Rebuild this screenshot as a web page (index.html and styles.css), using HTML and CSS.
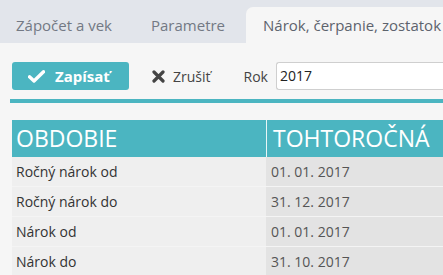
FILE: index.html
```html
<!DOCTYPE html>
<html lang="sk">
<head>
<meta charset="utf-8">
<link rel="stylesheet" href="styles.css">
</head>
<body>
<div class="tabs">
  <div class="tab t1">Zápočet a vek</div>
  <div class="tab t2">Parametre</div>
  <div class="tab active">Nárok, čerpanie, zostatok</div>
</div>
<div class="toolbar">
  <button class="btn-save">
    <svg class="check" width="17" height="13" viewBox="0 0 17 13"><path d="M1.5 6.8 L6 11 L15.5 1.8" fill="none" stroke="#fff" stroke-width="3.4" stroke-linecap="round" stroke-linejoin="round"/></svg>
    <span>Zapísať</span>
  </button>
  <div class="cancel">
    <svg class="x" width="13" height="13" viewBox="0 0 13 13"><path d="M2 2 L11 11 M11 2 L2 11" stroke="#444" stroke-width="3.2" stroke-linecap="round"/></svg>
    <span>Zrušiť</span>
  </div>
  <label class="rok">Rok</label>
  <div class="select">2017</div>
</div>
<div class="rule"></div>
<table class="grid">
  <thead>
    <tr><th class="c1">OBDOBIE</th><th class="c2">TOHTOROČNÁ</th></tr>
  </thead>
  <tbody>
    <tr><td class="c1">Ročný nárok od</td><td class="c2">01. 01. 2017</td></tr>
    <tr><td class="c1">Ročný nárok do</td><td class="c2">31. 12. 2017</td></tr>
    <tr><td class="c1">Nárok od</td><td class="c2">01. 01. 2017</td></tr>
    <tr><td class="c1">Nárok do</td><td class="c2">31. 10. 2017</td></tr>
  </tbody>
</table>
</body>
</html>
```
FILE: styles.css
```css
html, body {
  margin: 0;
  padding: 0;
  background: #f6f6f6;
  font-family: "Open Sans", "DejaVu Sans", sans-serif;
  overflow: hidden;
  width: 443px;
  height: 275px;
}
.tabs {
  display: flex;
  height: 43px;
  box-sizing: border-box;
  padding-top: 7px;
  background: #e2e5eb;
  overflow: hidden;
}
.tab {
  font-size: 15px;
  color: #737984;
  line-height: 36px;
  padding-left: 16px;
  white-space: nowrap;
  flex-shrink: 0;
  box-sizing: border-box;
}
.tab.t1 { width: 135px; }
.tab.t2 { width: 111px; }
.tab.active {
  padding-left: 17px;
  flex: 1 0 auto;
  background: #f6f6f6;
  border-radius: 7px 0 0 0;
  color: #5d636d;
}
.toolbar {
  display: flex;
  align-items: center;
  margin-top: 19px;
  padding-left: 12px;
  height: 28px;
}
.btn-save {
  display: flex;
  align-items: center;
  flex-shrink: 0;
  width: 117px;
  height: 28px;
  border: none;
  border-radius: 3px;
  background: #4bb5c1;
  color: #fff;
  font-family: "Open Sans", sans-serif;
  font-weight: 700;
  font-size: 15px;
  padding: 0 0 0 16px;
  box-sizing: border-box;
}
.btn-save .check { margin-right: 10px; }
.cancel {
  display: flex;
  align-items: center;
  margin-left: 23px;
  font-size: 14px;
  color: #444;
}
.cancel .x { margin-right: 8px; }
.rok {
  margin-left: 33px;
  font-size: 14px;
  color: #444;
}
.select {
  margin-left: 8px;
  flex: 1;
  height: 28px;
  box-sizing: border-box;
  border: 1px solid #cfcfcf;
  border-right: none;
  border-radius: 3px 0 0 3px;
  background: #fff;
  font-size: 14px;
  color: #222;
  line-height: 26px;
  padding-left: 3px;
}
.rule {
  margin: 9px 0 0 10px;
  height: 4px;
  background: #4bb5c1;
}
.grid {
  margin: 17px 0 0 12px;
  border-collapse: collapse;
  width: 431px;
  table-layout: fixed;
}
.grid th {
  background: #4bb5c1;
  color: #fff;
  font-weight: 400;
  font-size: 23px;
  text-align: left;
  height: 37px;
  padding: 0 0 0 4px;
  line-height: 37px;
  white-space: nowrap;
  overflow: hidden;
}
.grid th.c1 { width: 250px; border-right: 1px solid #e8f6f7; }
.grid th.c2 { padding-left: 6px; }
.grid td {
  height: 29px;
  padding: 0 0 0 4px;
  font-size: 14px;
  color: #333;
  border-bottom: 1px solid #f4f4f4;
}
.grid td.c1 { background: #efefef; }
.grid td.c2 {
  background: #e3e3e3;
  color: #555;
  padding-left: 4px;
  border-left: 1px solid #e3e3e3;
}
```
